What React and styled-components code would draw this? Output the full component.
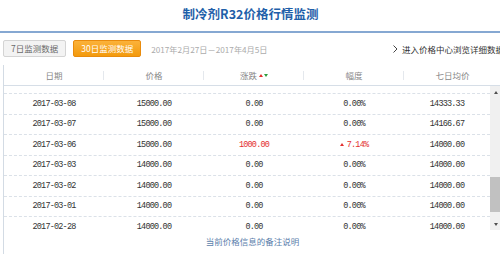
import React from "react";
import styled, { createGlobalStyle } from "styled-components";

const GlobalStyle = createGlobalStyle`
  html, body {
    margin: 0;
    padding: 0;
    background: #fff;
    overflow: hidden;
  }
  body {
    font-family: "Noto Sans CJK SC", "Liberation Sans", sans-serif;
  }
`;

const Page = styled.div`
  width: 501px;
  height: 254px;
`;

const Title = styled.h1`
  margin: 0;
  height: 31px;
  line-height: 28px;
  text-align: center;
  font-size: 12.5px;
  font-weight: 700;
  color: #1f5fa9;
  border-bottom: 2px solid #86a8d2;
`;

const Toolbar = styled.div`
  display: flex;
  align-items: center;
  padding: 7px 0 0 3px;
  margin-right: -3px;
  height: 17px;
  white-space: nowrap;
`;

const TabButton = styled.button`
  box-sizing: border-box;
  height: 17px;
  padding: 0 7px;
  margin-right: 7px;
  font-family: inherit;
  font-size: 8.5px;
  line-height: 15px;
  border-radius: 2px;
  cursor: pointer;
  border: 1px solid ${(p) => (p.$active ? "#e98b0c" : "#d4d4d4")};
  color: ${(p) => (p.$active ? "#fff" : "#6a6a6a")};
  background: ${(p) =>
    p.$active ? "linear-gradient(#fbb23a, #f39a0d)" : "#f3f3f3"};
`;

const DateRange = styled.span`
  margin-left: 3px;
  font-size: 8.2px;
  color: #ababab;
`;

const MoreLink = styled.a`
  margin-left: auto;
  display: flex;
  align-items: center;
  gap: 4px;
  flex-shrink: 0;
  font-size: 8.5px;
  color: #333;
  text-decoration: none;
`;

const Table = styled.div`
  margin: 8px 0 0 3px;
  border-left: 1px solid #d3dbe4;
  height: 189px;
`;

const COLS = "100px 100px 100px 100px 1fr";

const HeadRow = styled.div`
  display: grid;
  grid-template-columns: ${COLS};
  height: 20px;
  border-bottom: 1px solid #d6dee7;
`;

const HeadCell = styled.div`
  display: flex;
  align-items: center;
  justify-content: center;
  gap: 1px;
  font-size: 8.5px;
  color: #888;
  background: ${(p) =>
    p.$last
      ? "none"
      : "linear-gradient(#e4e8ed, #e4e8ed) right center / 1px 9px no-repeat"};
`;

const Sorts = styled.span`
  display: inline-flex;
  gap: 1px;
  margin-left: 1px;
`;

const Tri = styled.span`
  width: 0;
  height: 0;
  border-left: 2.5px solid transparent;
  border-right: 2.5px solid transparent;
  ${(p) =>
    p.$up
      ? `border-bottom: 3px solid ${p.$color};`
      : `border-top: 3px solid ${p.$color};`}
`;

const Body = styled.div`
  display: flex;
  height: 144px;
`;

const Viewport = styled.div`
  flex: 1;
  overflow: hidden;
`;

const List = styled.div`
  margin-top: -12.5px;
`;

const Row = styled.div`
  display: grid;
  grid-template-columns: ${COLS};
  height: 19.5px;
  border-bottom: 1px dashed #dbe1e8;
`;

const Cell = styled.div`
  display: flex;
  align-items: center;
  justify-content: center;
  gap: 3px;
  font-family: "Liberation Mono", monospace;
  font-size: 8.5px;
  letter-spacing: -0.8px;
  color: ${(p) => (p.$up ? "#e3302f" : "#333")};
`;

const Scrollbar = styled.div`
  width: 11px;
  display: flex;
  flex-direction: column;
  background: #f0f0f0;
`;

const ScrollArrow = styled.div`
  height: 12px;
  display: flex;
  align-items: center;
  justify-content: center;
`;

const Track = styled.div`
  flex: 1;
`;

const Thumb = styled.div`
  height: 35px;
  background: #c1c1c1;
`;

const Note = styled.div`
  height: 23px;
  line-height: 23px;
  text-align: center;
  font-size: 8.5px;
  color: #5b7eab;
`;

const rows = [
  ["2017-03-09", "15000.00", "0.00", "0.00%", "14500.00"],
  ["2017-03-08", "15000.00", "0.00", "0.00%", "14333.33"],
  ["2017-03-07", "15000.00", "0.00", "0.00%", "14166.67"],
  ["2017-03-06", "15000.00", "1000.00", "7.14%", "14000.00", true],
  ["2017-03-03", "14000.00", "0.00", "0.00%", "14000.00"],
  ["2017-03-02", "14000.00", "0.00", "0.00%", "14000.00"],
  ["2017-03-01", "14000.00", "0.00", "0.00%", "14000.00"],
  ["2017-02-28", "14000.00", "0.00", "0.00%", "14000.00"],
];

export default function App() {
  return (
    <Page>
      <GlobalStyle />
      <Title>制冷剂R32价格行情监测</Title>
      <Toolbar>
        <TabButton>7日监测数据</TabButton>
        <TabButton $active>30日监测数据</TabButton>
        <DateRange>2017年2月27日－2017年4月5日</DateRange>
        <MoreLink href="#">
          <svg width="5" height="8" viewBox="0 0 5 8">
            <polyline points="0.5,0.5 4,4 0.5,7.5" fill="none" stroke="#444" strokeWidth="1" />
          </svg>
          进入价格中心浏览详细数据
        </MoreLink>
      </Toolbar>
      <Table>
        <HeadRow>
          <HeadCell>日期</HeadCell>
          <HeadCell>价格</HeadCell>
          <HeadCell>
            涨跌
            <Sorts>
              <Tri $up $color="#e3302f" />
              <Tri $color="#2e9e3e" />
            </Sorts>
          </HeadCell>
          <HeadCell>幅度</HeadCell>
          <HeadCell $last>七日均价</HeadCell>
        </HeadRow>
        <Body>
          <Viewport>
            <List>
              {rows.map(([date, price, change, pct, avg, up]) => (
                <Row key={date}>
                  <Cell>{date}</Cell>
                  <Cell>{price}</Cell>
                  <Cell $up={up}>{change}</Cell>
                  <Cell $up={up}>
                    {up && <Tri $up $color="#e3302f" />}
                    {pct}
                  </Cell>
                  <Cell>{avg}</Cell>
                </Row>
              ))}
            </List>
          </Viewport>
          <Scrollbar>
            <ScrollArrow>
              <Tri $up $color="#505050" />
            </ScrollArrow>
            <Track>
              <Thumb style={{ marginTop: 79 }} />
            </Track>
            <ScrollArrow>
              <Tri $color="#505050" />
            </ScrollArrow>
          </Scrollbar>
        </Body>
        <Note>当前价格信息的备注说明</Note>
      </Table>
    </Page>
  );
}
